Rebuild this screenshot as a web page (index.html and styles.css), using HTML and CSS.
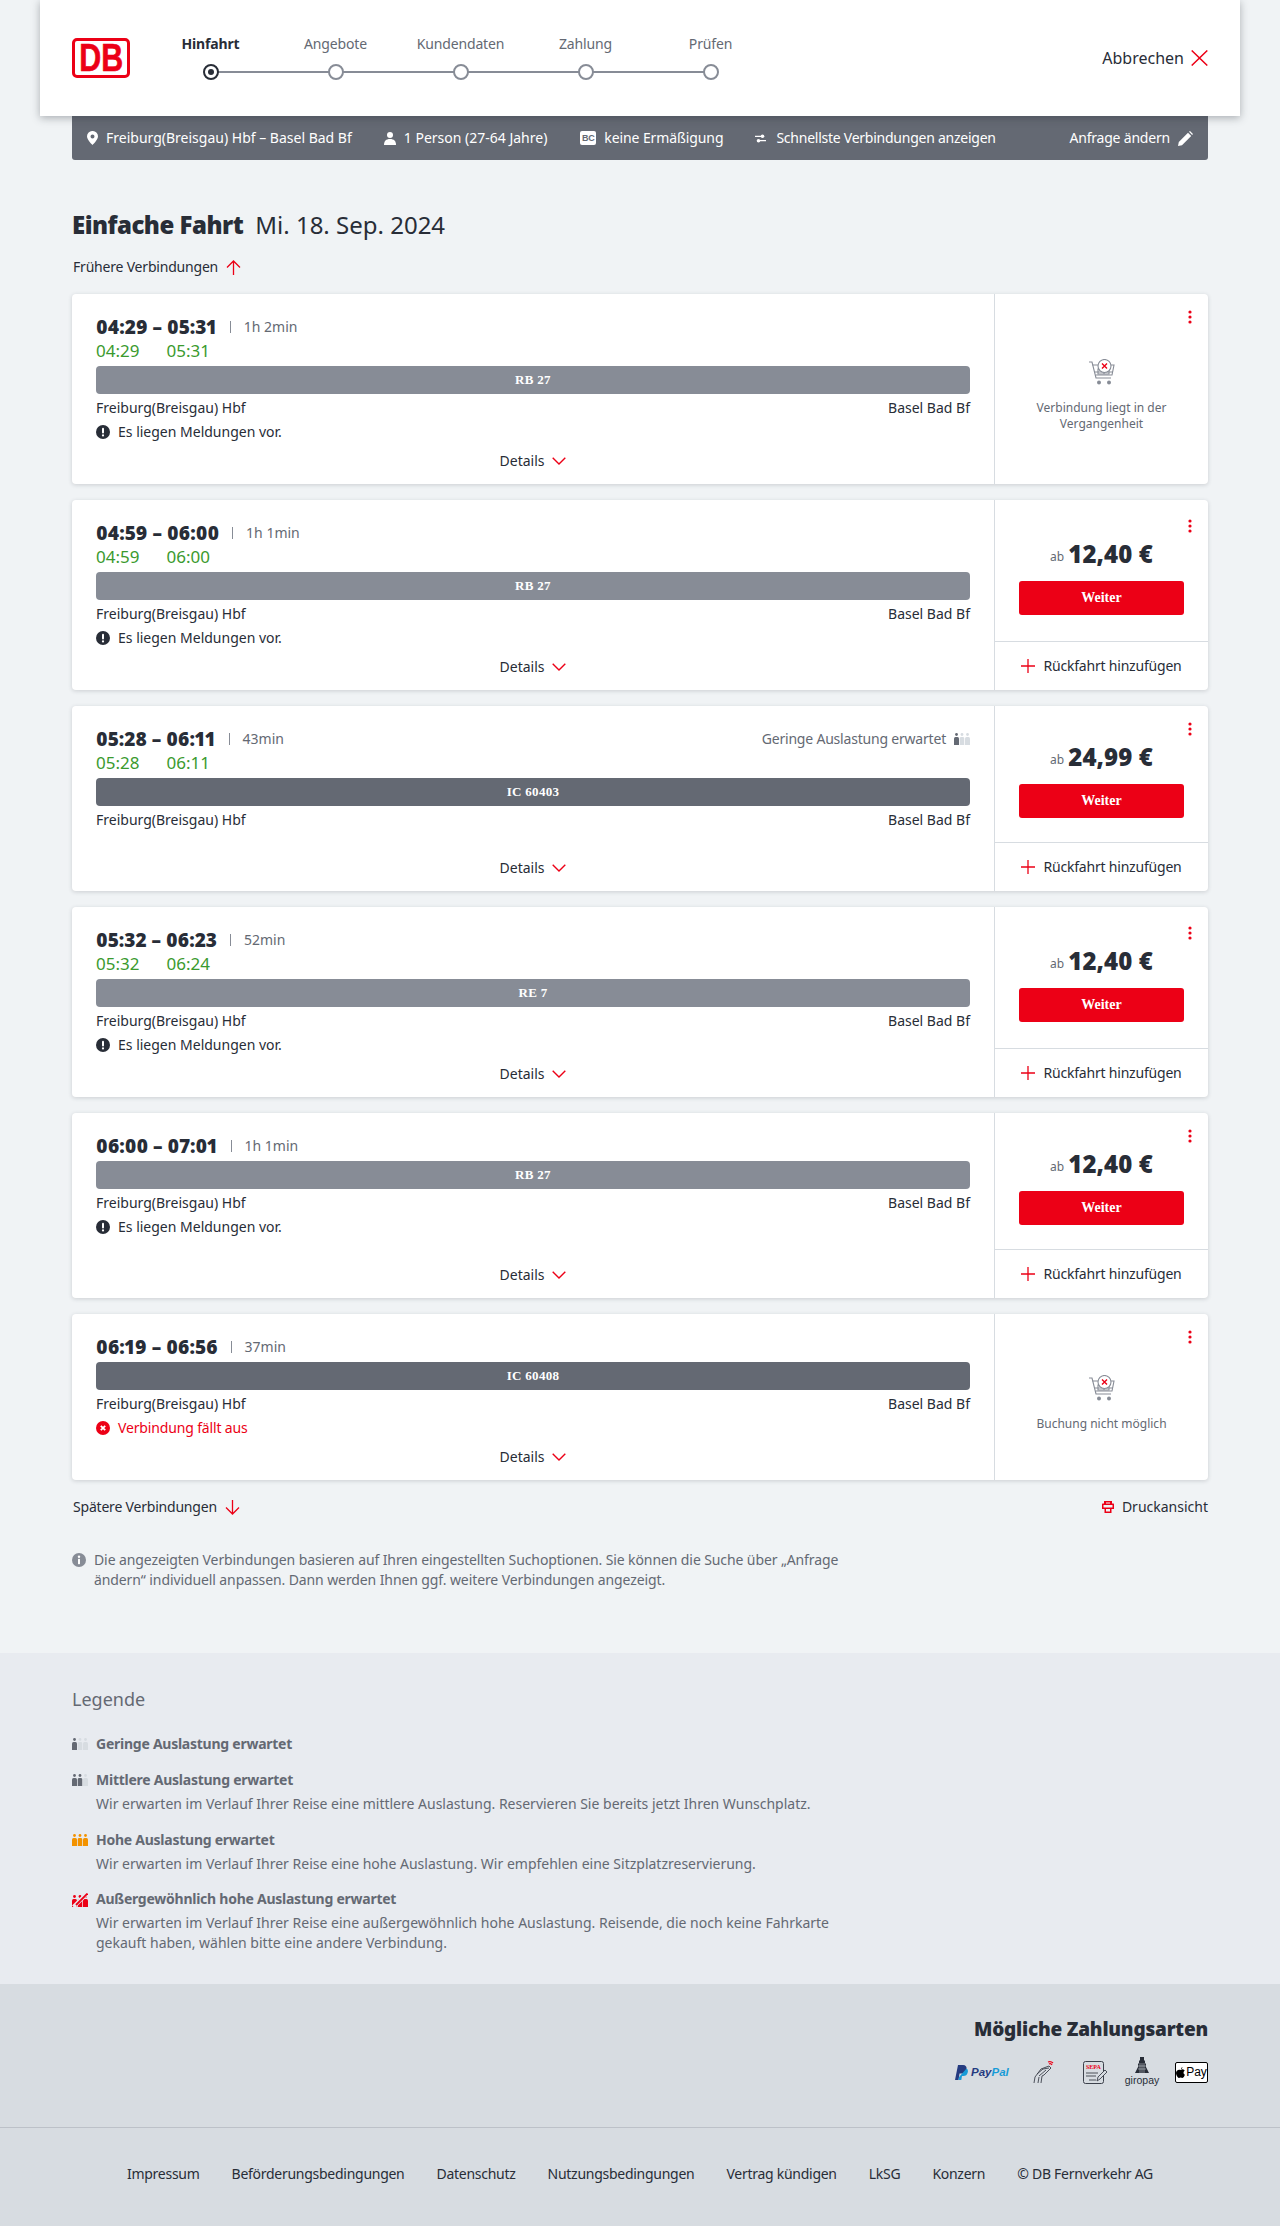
FILE: index.html
```html
<!DOCTYPE html>
<html lang="de">
<head>
<meta charset="utf-8">
<title>Einfache Fahrt</title>
<link rel="stylesheet" href="styles.css">
</head>
<body>
<svg class="defs" width="0" height="0" aria-hidden="true">
  <symbol id="i-chev" viewBox="0 0 14 8"><path d="M.7.7 7 7 13.300.7" fill="none" stroke="#ec0016" stroke-width="1.400"/></symbol>
  <symbol id="i-dots" viewBox="0 0 4 14"><circle cx="2" cy="2" r="1.600" fill="#ec0016"/><circle cx="2" cy="7" r="1.600" fill="#ec0016"/><circle cx="2" cy="12" r="1.600" fill="#ec0016"/></symbol>
  <symbol id="i-msg" viewBox="0 0 14 14"><circle cx="7" cy="7" r="7" fill="#282d37"/><rect x="6" y="2.800" width="2" height="5.600" rx="1" fill="#fff"/><circle cx="7" cy="10.400" r="1.100" fill="#fff"/></symbol>
  <symbol id="i-plus" viewBox="0 0 14 14"><path d="M7 0v14M0 7h14" stroke="#ec0016" stroke-width="1.300" fill="none"/></symbol>
  <symbol id="i-cart" viewBox="0 0 26 26">
    <g fill="none" stroke="#878c96" stroke-width="1.100"><path d="M0 3h3l4 16h15"/><path d="M3.500 6h7M18 6h7l-2 10H6.500"/><path d="M6 13h18M9 10h6v5H9zM15 11h5v4h-5z"/><circle cx="15.500" cy="7" r="6.500" fill="#fff"/></g>
    <path d="M13 4.500l5 5M18 4.500l-5 5" stroke="#ec0016" stroke-width="1.400"/>
    <circle cx="10" cy="23.500" r="2" fill="#878c96"/><circle cx="20" cy="23.500" r="2" fill="#878c96"/>
  </symbol>
  <symbol id="p-bod" viewBox="0 0 5 12"><circle cx="2.500" cy="1.500" r="1.400"/><path d="M0 12V5.500Q0 4 1.500 4h2Q5 4 5 5.500V12z"/></symbol>
</svg>

<header class="top">
  <div class="db-logo"><span>DB</span></div>
  <ol class="steps">
    <li class="step step-active"><span class="step-label">Hinfahrt</span><span class="step-dot"></span></li>
    <li class="step"><span class="step-label">Angebote</span><span class="step-dot"></span></li>
    <li class="step"><span class="step-label">Kundendaten</span><span class="step-dot"></span></li>
    <li class="step"><span class="step-label">Zahlung</span><span class="step-dot"></span></li>
    <li class="step step-last"><span class="step-label">Prüfen</span><span class="step-dot"></span></li>
  </ol>
  <a class="cancel">Abbrechen
    <svg width="17" height="16" viewBox="0 0 17 16"><path d="M.7.5 16.300 15.500M16.300.5.700 15.500" stroke="#ec0016" stroke-width="1.500" fill="none"/></svg>
  </a>
</header>

<main class="main">
  <div class="query">
    <span class="q q-route"><svg width="11" height="14" viewBox="0 0 11 14"><path fill-rule="evenodd" d="M5.500 0A5.300 5.300 0 0 1 11 5.300C11 8.500 7 12.500 5.500 14 4 12.500 0 8.500 0 5.300A5.300 5.300 0 0 1 5.500 0zm0 3.400a2 2 0 1 0 0 4 2 2 0 0 0 0-4z" fill="#fff"/></svg>Freiburg(Breisgau) Hbf – Basel Bad Bf</span>
    <span class="q q-person"><svg width="12" height="13" viewBox="0 0 12 13"><circle cx="6" cy="3" r="3" fill="#fff"/><path d="M0 13c0-4 2-6 6-6s6 2 6 6z" fill="#fff"/></svg>1 Person (27-64 Jahre)</span>
    <span class="q q-card"><span class="bc">BC</span>keine Ermäßigung</span>
    <span class="q q-fast"><svg width="11" height="9" viewBox="0 0 11 9"><path d="M0 2.300h9M2 6.700h9" stroke="#fff" stroke-width="1.300"/><circle cx="7.500" cy="2.200" r="1.800" fill="#fff"/><circle cx="3.500" cy="6.800" r="1.800" fill="#fff"/></svg>Schnellste Verbindungen anzeigen</span>
    <span class="q q-edit">Anfrage ändern<svg width="15" height="15" viewBox="0 0 15 15"><path d="M0 15l.8-4L10 1.800l3.200 3.200L4 14.200zM11 .8l1-.8 3 3-.9 1z" fill="#fff"/></svg></span>
  </div>

  <h1 class="page-title"><strong>Einfache Fahrt</strong><span>Mi. 18. Sep. 2024</span></h1>

  <a class="nav-link nav-earlier">Frühere Verbindungen
    <svg width="15" height="15" viewBox="0 0 15 15"><path d="M7.500 15V1M1 7.500 7.500 1 14 7.500" fill="none" stroke="#ec0016" stroke-width="1.300"/></svg>
  </a>

  <div class="cards">
    <article class="card">
      <div class="c-main">
        <div class="c-head"><b class="c-time">04:29 – 05:31</b><span class="c-dur">1h 2min</span></div>
        <div class="c-real"><span>04:29</span><span>05:31</span></div>
        <div class="c-bar c-bar-light">RB 27</div>
        <div class="c-stations"><span>Freiburg(Breisgau) Hbf</span><span>Basel Bad Bf</span></div>
        <div class="c-msg"><svg width="14" height="14"><use href="#i-msg"/></svg>Es liegen Meldungen vor.</div>
        <div class="c-details">Details<svg width="14" height="8"><use href="#i-chev"/></svg></div>
      </div>
      <div class="c-side">
        <div class="c-dots"><svg width="4" height="14"><use href="#i-dots"/></svg></div>
        <div class="c-none"><svg width="26" height="26"><use href="#i-cart"/></svg><p>Verbindung liegt in der Vergangenheit</p></div>
      </div>
    </article>

    <article class="card">
      <div class="c-main">
        <div class="c-head"><b class="c-time">04:59 – 06:00</b><span class="c-dur">1h 1min</span></div>
        <div class="c-real"><span>04:59</span><span>06:00</span></div>
        <div class="c-bar c-bar-light">RB 27</div>
        <div class="c-stations"><span>Freiburg(Breisgau) Hbf</span><span>Basel Bad Bf</span></div>
        <div class="c-msg"><svg width="14" height="14"><use href="#i-msg"/></svg>Es liegen Meldungen vor.</div>
        <div class="c-details">Details<svg width="14" height="8"><use href="#i-chev"/></svg></div>
      </div>
      <div class="c-side">
        <div class="c-offer">
          <div class="c-dots"><svg width="4" height="14"><use href="#i-dots"/></svg></div>
          <div class="c-price"><small>ab</small><b>12,40 €</b></div>
          <a class="c-btn">Weiter</a>
        </div>
        <div class="c-return"><svg width="14" height="14"><use href="#i-plus"/></svg>Rückfahrt hinzufügen</div>
      </div>
    </article>

    <article class="card">
      <div class="c-main">
        <div class="c-head"><b class="c-time">05:28 – 06:11</b><span class="c-dur">43min</span>
          <span class="c-load">Geringe Auslastung erwartet<svg class="occ" width="16" height="12" viewBox="0 0 16 12"><use href="#p-bod" width="5" height="12" fill="#646973"/><use href="#p-bod" x="5.500" width="5" height="12" fill="#d7dce1"/><use href="#p-bod" x="11" width="5" height="12" fill="#d7dce1"/></svg></span>
        </div>
        <div class="c-real"><span>05:28</span><span>06:11</span></div>
        <div class="c-bar c-bar-dark">IC 60403</div>
        <div class="c-stations"><span>Freiburg(Breisgau) Hbf</span><span>Basel Bad Bf</span></div>
        <div class="c-details">Details<svg width="14" height="8"><use href="#i-chev"/></svg></div>
      </div>
      <div class="c-side">
        <div class="c-offer">
          <div class="c-dots"><svg width="4" height="14"><use href="#i-dots"/></svg></div>
          <div class="c-price"><small>ab</small><b>24,99 €</b></div>
          <a class="c-btn">Weiter</a>
        </div>
        <div class="c-return"><svg width="14" height="14"><use href="#i-plus"/></svg>Rückfahrt hinzufügen</div>
      </div>
    </article>

    <article class="card">
      <div class="c-main">
        <div class="c-head"><b class="c-time">05:32 – 06:23</b><span class="c-dur">52min</span></div>
        <div class="c-real"><span>05:32</span><span>06:24</span></div>
        <div class="c-bar c-bar-light">RE 7</div>
        <div class="c-stations"><span>Freiburg(Breisgau) Hbf</span><span>Basel Bad Bf</span></div>
        <div class="c-msg"><svg width="14" height="14"><use href="#i-msg"/></svg>Es liegen Meldungen vor.</div>
        <div class="c-details">Details<svg width="14" height="8"><use href="#i-chev"/></svg></div>
      </div>
      <div class="c-side">
        <div class="c-offer">
          <div class="c-dots"><svg width="4" height="14"><use href="#i-dots"/></svg></div>
          <div class="c-price"><small>ab</small><b>12,40 €</b></div>
          <a class="c-btn">Weiter</a>
        </div>
        <div class="c-return"><svg width="14" height="14"><use href="#i-plus"/></svg>Rückfahrt hinzufügen</div>
      </div>
    </article>

    <article class="card">
      <div class="c-main">
        <div class="c-head"><b class="c-time">06:00 – 07:01</b><span class="c-dur">1h 1min</span></div>
        <div class="c-bar c-bar-light">RB 27</div>
        <div class="c-stations"><span>Freiburg(Breisgau) Hbf</span><span>Basel Bad Bf</span></div>
        <div class="c-msg"><svg width="14" height="14"><use href="#i-msg"/></svg>Es liegen Meldungen vor.</div>
        <div class="c-details">Details<svg width="14" height="8"><use href="#i-chev"/></svg></div>
      </div>
      <div class="c-side">
        <div class="c-offer">
          <div class="c-dots"><svg width="4" height="14"><use href="#i-dots"/></svg></div>
          <div class="c-price"><small>ab</small><b>12,40 €</b></div>
          <a class="c-btn">Weiter</a>
        </div>
        <div class="c-return"><svg width="14" height="14"><use href="#i-plus"/></svg>Rückfahrt hinzufügen</div>
      </div>
    </article>

    <article class="card">
      <div class="c-main">
        <div class="c-head"><b class="c-time">06:19 – 06:56</b><span class="c-dur">37min</span></div>
        <div class="c-bar c-bar-dark">IC 60408</div>
        <div class="c-stations"><span>Freiburg(Breisgau) Hbf</span><span>Basel Bad Bf</span></div>
        <div class="c-msg c-msg-red"><svg width="14" height="14" viewBox="0 0 14 14"><circle cx="7" cy="7" r="7" fill="#ec0016"/><path d="M4.800 4.800l4.400 4.400M9.200 4.800 4.800 9.200" stroke="#fff" stroke-width="1.800"/></svg>Verbindung fällt aus</div>
        <div class="c-details">Details<svg width="14" height="8"><use href="#i-chev"/></svg></div>
      </div>
      <div class="c-side">
        <div class="c-dots"><svg width="4" height="14"><use href="#i-dots"/></svg></div>
        <div class="c-none"><svg width="26" height="26"><use href="#i-cart"/></svg><p>Buchung nicht möglich</p></div>
      </div>
    </article>
  </div>

  <div class="after">
    <a class="nav-link">Spätere Verbindungen
      <svg width="15" height="15" viewBox="0 0 15 15"><path d="M7.500 0V14M1 7.500 7.500 14 14 7.500" fill="none" stroke="#ec0016" stroke-width="1.300"/></svg>
    </a>
    <a class="nav-link nav-print"><svg width="12" height="12" viewBox="0 0 12 12"><path fill-rule="evenodd" d="M2 0h8v2.500h1.500Q12 2.500 12 3.500V8H9.500v4h-7V8H0V3.500q0-1 .5-1H2zM4 2.500h4V1.500H4zM1.500 4v2.500h9V4zM4 8v2.500h4V8z" fill="#ec0016"/></svg>Druckansicht</a>
  </div>

  <div class="info">
    <svg width="14" height="14" viewBox="0 0 14 14"><circle cx="7" cy="7" r="7" fill="#878c96"/><rect x="6" y="5.800" width="2" height="5.400" rx=".6" fill="#fff"/><circle cx="7" cy="3.700" r="1.200" fill="#fff"/></svg>
    <p>Die angezeigten Verbindungen basieren auf Ihren eingestellten Suchoptionen. Sie können die Suche über „Anfrage ändern“ individuell anpassen. Dann werden Ihnen ggf. weitere Verbindungen angezeigt.</p>
  </div>
</main>

<section class="legend">
  <h2>Legende</h2>
  <div class="leg">
    <svg class="occ" width="16" height="12" viewBox="0 0 16 12"><use href="#p-bod" width="5" height="12" fill="#646973"/><use href="#p-bod" x="5.500" width="5" height="12" fill="#d7dce1"/><use href="#p-bod" x="11" width="5" height="12" fill="#d7dce1"/></svg>
    <div><h3>Geringe Auslastung erwartet</h3></div>
  </div>
  <div class="leg">
    <svg class="occ" width="16" height="12" viewBox="0 0 16 12"><use href="#p-bod" width="5" height="12" fill="#646973"/><use href="#p-bod" x="5.500" width="5" height="12" fill="#646973"/><use href="#p-bod" x="11" width="5" height="12" fill="#d7dce1"/></svg>
    <div><h3>Mittlere Auslastung erwartet</h3><p>Wir erwarten im Verlauf Ihrer Reise eine mittlere Auslastung. Reservieren Sie bereits jetzt Ihren Wunschplatz.</p></div>
  </div>
  <div class="leg">
    <svg class="occ" width="16" height="12" viewBox="0 0 16 12"><use href="#p-bod" width="5" height="12" fill="#f39200"/><use href="#p-bod" x="5.500" width="5" height="12" fill="#f39200"/><use href="#p-bod" x="11" width="5" height="12" fill="#f39200"/></svg>
    <div><h3>Hohe Auslastung erwartet</h3><p>Wir erwarten im Verlauf Ihrer Reise eine hohe Auslastung. Wir empfehlen eine Sitzplatzreservierung.</p></div>
  </div>
  <div class="leg leg-last">
    <svg class="occ" width="16" height="14" viewBox="0 0 16 14"><use href="#p-bod" y="2" width="5" height="12" fill="#ec0016"/><use href="#p-bod" x="5.500" y="2" width="5" height="12" fill="#ec0016"/><use href="#p-bod" x="11" y="2" width="5" height="12" fill="#ec0016"/><path d="M1.500 14 15 .5" stroke="#e8ebf0" stroke-width="4"/><path d="M4 12 15.500 .5" stroke="#ec0016" stroke-width="1.800"/></svg>
    <div><h3>Außergewöhnlich hohe Auslastung erwartet</h3><p>Wir erwarten im Verlauf Ihrer Reise eine außergewöhnlich hohe Auslastung. Reisende, die noch keine Fahrkarte gekauft haben, wählen bitte eine andere Verbindung.</p></div>
  </div>
</section>

<section class="pay">
  <h2>Mögliche Zahlungsarten</h2>
  <div class="pay-icons">
    <div class="pay-paypal">
      <svg width="13" height="15" viewBox="0 0 13 15"><path d="M3 0h5q4 .3 3.500 4-.7 4.500-5 4.500H4.500L3.500 15H0z" fill="#253b80"/><path d="M11.500 3.500q2 1 1.200 4-.8 3.500-4.500 3.500H7l-.7 4H3.500l.6-3z" fill="#179bd7"/></svg>
      <span><b class="pp1">Pay</b><b class="pp2">Pal</b></span>
    </div>
    <svg class="pay-hand" width="22" height="23" viewBox="0 0 22 23"><g fill="none" stroke="#3c414b" stroke-width=".9"><path d="M1 22l1-6L8 8l8-3 2 2-7 7-2 1-1 7"/><path d="M4 13l6-5 6-1M6 15l7-6M5 22l1-6"/></g><path d="M15 1q3-1 5 1M16 3q2-1 3 1" fill="none" stroke="#ec0016" stroke-width="1.200"/></svg>
    <svg class="pay-sepa" width="25" height="23" viewBox="0 0 25 23"><rect x=".5" y=".5" width="20" height="22" rx="2" fill="none" stroke="#3c414b"/><text x="3" y="8" class="t-sepa">SEPA</text><path d="M3 12h12M3 15h10M6 19h7" stroke="#3c414b" stroke-width=".9"/><path d="M14 20l1-4 7-7 2 2-7 7z" fill="#d7dce1" stroke="#3c414b" stroke-width=".9"/></svg>
    <div class="pay-giro">
      <svg width="14" height="16" viewBox="0 0 14 16"><path d="M5 0h4v3l1 1v2l1 1v3l3 6H0l3-6V7l1-1V4l1-1z" fill="#282d37"/><path d="M3 9h8M3 12h8M5 6v10M7 6v10M9 6v10" stroke="#d7dce1" stroke-width=".5"/></svg>
      <span>giropay</span>
    </div>
    <div class="pay-apple"><svg width="9" height="11" viewBox="0 0 9 11"><path d="M6.500 0q.1 1.500-1.600 2.300Q4.700 1 6.500 0zM4.500 3Q6 2 7.400 2.400 8.300 2.800 8.700 3.500 7.300 4.500 7.500 6q.2 1.300 1.400 1.800Q8 10.800 6.500 11q-1 0-2-.4-1 .4-1.800.3C1.500 10.600 0 8 0 6c0-2.500 2.500-4 4.500-3z" fill="#000"/></svg><span>Pay</span></div>
  </div>
</section>

<footer class="foot">
  <a>Impressum</a><a>Beförderungsbedingungen</a><a>Datenschutz</a><a>Nutzungsbedingungen</a><a>Vertrag kündigen</a><a>LkSG</a><a>Konzern</a><a>© DB Fernverkehr AG</a>
</footer>
</body>
</html>
```
FILE: styles.css
```css
* { box-sizing: border-box; }
html, body { margin: 0; padding: 0; }
body {
  background: #f0f3f5;
  color: #282d37;
  font-family: "Noto Sans", "Liberation Sans", sans-serif;
  font-size: 14px;
  line-height: 24px;
}
h1, h2, h3, p, ol { margin: 0; padding: 0; }
.defs { position: absolute; }
svg { display: block; flex: none; }

/* header */
.top {
  position: relative;
  z-index: 2;
  margin: 0 40px;
  height: 116px;
  background: #fff;
  box-shadow: 0 2px 8px rgba(40, 45, 55, .35);
  padding: 0 32px;
  display: flex;
  align-items: center;
}
.db-logo {
  width: 58px;
  height: 40px;
  background: #fff;
  border: 3px solid #ec0016;
  border-radius: 5px;
  display: flex;
  align-items: center;
  justify-content: center;
}
.db-logo span {
  color: #ec0016;
  font: 700 39px/34px "Liberation Sans", sans-serif;
  -webkit-text-stroke: .6px #ec0016;
  transform: scaleX(.78);
}
.steps {
  list-style: none;
  display: flex;
  margin-left: 18px;
  align-self: flex-start;
  padding-top: 32px;
}
.step {
  position: relative;
  width: 125px;
  height: 48px;
  text-align: center;
  color: #646973;
  line-height: 24px;
  letter-spacing: -.15px;
}
.step-label { display: block; }
.step-active .step-label { font-weight: 700; color: #282d37; }
.step-dot {
  position: absolute;
  top: 32px;
  left: 54.500px;
  width: 16px;
  height: 16px;
  border-radius: 50%;
  border: 2px solid #878c96;
  background: #fff;
  z-index: 1;
}
.step::after {
  content: "";
  position: absolute;
  top: 39px;
  left: 62px;
  width: 125px;
  height: 2px;
  background: #878c96;
}
.step-last::after { display: none; }
.step-active .step-dot { border-color: #282d37; }
.step-active .step-dot::after {
  content: "";
  position: absolute;
  left: 3px;
  top: 3px;
  width: 6px;
  height: 6px;
  border-radius: 50%;
  background: #282d37;
}
.cancel {
  margin-left: auto;
  display: flex;
  align-items: center;
  gap: 7px;
  font-size: 16px;
}

/* query bar */
.main { padding: 0 72px; }
.query {
  height: 44px;
  background: #646973;
  border-radius: 0 0 3px 3px;
  color: #fff;
  display: flex;
  align-items: center;
  position: relative;
}
.q { display: flex; align-items: center; gap: 8px; }
.q-route { margin-left: 15px; }
.q-person { margin-left: 32px; }
.q-card { margin-left: 33px; letter-spacing: -.1px; }
.q-fast { margin-left: 32px; gap: 10px; letter-spacing: -.25px; }
.q-edit { margin-left: auto; margin-right: 15px; letter-spacing: -.2px; }
.bc {
  width: 16px;
  height: 14px;
  border-radius: 2px;
  background: #fff;
  color: #646973;
  font: 700 9px/14px "Liberation Sans", sans-serif;
  text-align: center;
}

.page-title {
  margin-top: 48px;
  height: 34px;
  line-height: 34px;
  font-size: 24px;
  font-weight: 400;
  display: flex;
  gap: 12px;
}
.page-title strong { font-weight: 900; letter-spacing: -.5px; }
.nav-link { display: flex; align-items: center; gap: 8px; margin-left: 1px; letter-spacing: -.2px; }
.nav-earlier { margin-top: 13px; }
.nav-print { letter-spacing: 0; }

/* cards */
.cards { margin-top: 15px; display: flex; flex-direction: column; gap: 16px; }
.card {
  display: flex;
  background: #fff;
  border-radius: 4px;
  box-shadow: 0 1px 4px rgba(40, 45, 55, .18);
}
.c-main {
  flex: 1;
  min-width: 0;
  padding: 20px 24px 11px;
  display: flex;
  flex-direction: column;
}
.c-head { display: flex; align-items: center; height: 26px; margin-bottom: 2px; }
.c-time { font-size: 19px; font-weight: 900; font-feature-settings: "pnum"; }
.c-dur { color: #646973; font-size: 14px; position: relative; margin-left: 13px; padding-left: 14px; }
.c-dur::before { content: ""; position: absolute; left: 0; top: 6px; width: 1px; height: 12px; background: #878c96; }
.c-load { margin-left: auto; color: #646973; display: flex; align-items: center; gap: 8px; letter-spacing: -.2px; }
.c-real { height: 24px; margin-top: -2px; margin-bottom: 2px; display: flex; gap: 27px; color: #3a9a2e; font-size: 17px; line-height: 22px; }
.c-bar {
  height: 28px;
  border-radius: 4px;
  color: #fff;
  text-align: center;
  font: 700 13px/28px "Liberation Serif", serif;
  letter-spacing: .3px;
}
.c-bar-light { background: #878c96; }
.c-bar-dark { background: #646973; }
.c-stations { display: flex; justify-content: space-between; margin-top: 2px; }
.c-msg { display: flex; align-items: center; gap: 8px; }
.c-msg-red { color: #ec0016; letter-spacing: -.15px; }
.c-details {
  margin-top: auto;
  padding-top: 5px;
  height: 29px;
  display: flex;
  justify-content: center;
  align-items: center;
  gap: 8px;
}
.c-side {
  width: 214px;
  flex: none;
  border-left: 1px solid #d7dce1;
  display: flex;
  flex-direction: column;
}
.c-offer {
  flex: 1;
  display: flex;
  flex-direction: column;
  justify-content: center;
  padding: 0 24px;
}
.c-dots { display: flex; justify-content: flex-end; padding: 16px 16px 0 0; }
.c-offer .c-dots { margin-right: -24px; padding-right: 16px; }
.c-price {
  height: 32px;
  margin-top: 5px;
  display: flex;
  align-items: center;
  justify-content: center;
  gap: 4px;
}
.c-price small { font-size: 12px; color: #646973; margin-top: 6px; }
.c-price b { font-size: 24px; font-weight: 900; letter-spacing: .1px; }
.c-btn {
  margin-top: 11px;
  margin-bottom: 24px;
  height: 34px;
  background: #ec0016;
  border-radius: 3px;
  color: #fff;
  text-align: center;
  font: 700 14px/34px "Liberation Serif", serif;
}
.c-return {
  height: 49px;
  border-top: 1px solid #d7dce1;
  display: flex;
  align-items: center;
  justify-content: center;
  gap: 8px;
  letter-spacing: -.2px;
}
.c-none {
  flex: 1;
  padding: 0 24px 18px;
  display: flex;
  flex-direction: column;
  align-items: center;
  justify-content: center;
  text-align: center;
  color: #646973;
  font-size: 12px;
  line-height: 16px;
}
.c-none p { margin-top: 15px; }

/* below cards */
.after { margin-top: 15px; display: flex; justify-content: space-between; }
.info { margin-top: 31px; display: flex; gap: 8px; color: #646973; line-height: 20px; letter-spacing: -.1px; }
.info svg { margin-top: 3px; }
.info p { width: 760px; }

/* legend */
.legend { margin-top: 63px; background: #e8ebf0; padding: 33px 72px 31px; color: #646973; }
.legend h2 { font-size: 18px; font-weight: 400; line-height: 26px; margin-bottom: 22px; }
.leg { display: flex; gap: 8px; margin-top: 16px; line-height: 20px; }
.legend h2 + .leg { margin-top: 0; }
.leg .occ { margin-top: 4px; }
.leg-last { margin-top: 15px; }
.leg h3 { font: 700 14px/20px "Noto Sans", sans-serif; letter-spacing: -.25px; }
.leg p { margin-top: 4px; width: 735px; }

/* pay */
.pay {
  height: 144px;
  background: #d7dce1;
  border-bottom: 1px solid #bcc1c8;
  padding: 30px 72px 0;
}
.pay h2 { text-align: right; font-size: 19px; font-weight: 900; line-height: 30px; letter-spacing: -.2px; }
.pay-icons { margin-top: 12px; height: 32px; display: flex; align-items: center; justify-content: flex-end; }
.pay-paypal { display: flex; align-items: center; gap: 3px; width: 56px; }
.pay-paypal span { font: italic 700 11.500px/15px "Liberation Sans", sans-serif; }
.pp1 { color: #253b80; }
.pp2 { color: #179bd7; }
.pay-hand { margin-left: 22px; }
.pay-sepa { margin-left: 28px; }
.t-sepa { font: 700 6px "Liberation Serif", serif; fill: #ec0016; }
.pay-giro { margin-left: 17px; width: 34px; display: flex; flex-direction: column; align-items: center; font: 10.500px/13px "Liberation Sans", sans-serif; }
.pay-giro span { margin-top: 1px; }
.pay-apple {
  margin-left: 16px;
  width: 33px;
  height: 21px;
  background: #fff;
  border: 1px solid #000;
  border-radius: 2px;
  display: flex;
  align-items: center;
  justify-content: center;
  gap: 1px;
  color: #000;
  font: 12px/14px "Liberation Sans", sans-serif;
}

/* footer */
.foot {
  height: 98px;
  background: #d7dce1;
  display: flex;
  justify-content: center;
  gap: 32px;
  padding-top: 34px;
  letter-spacing: -.27px;
}
```
